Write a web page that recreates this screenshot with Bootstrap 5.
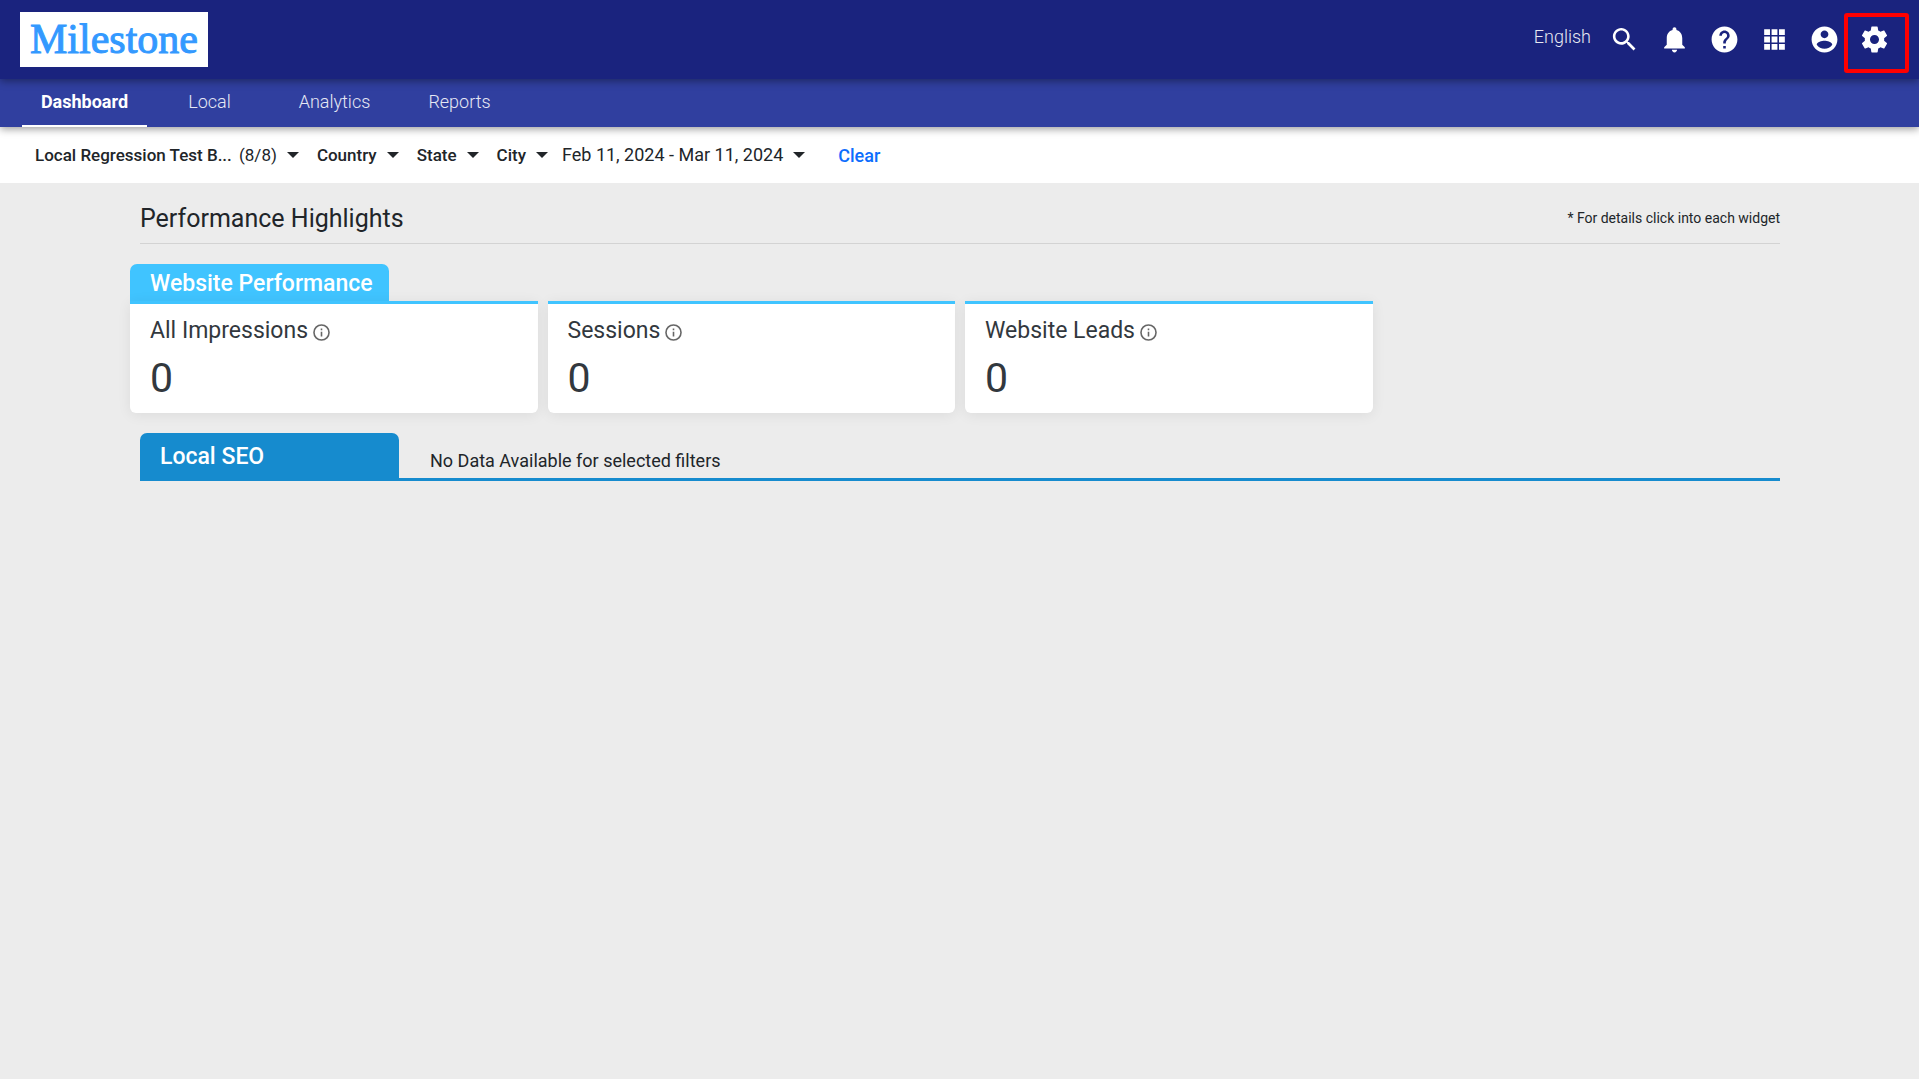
<!DOCTYPE html>
<html lang="en">
<head>
<meta charset="utf-8">
<meta name="viewport" content="width=device-width, initial-scale=1">
<title>Milestone - Dashboard</title>
<link href="https://cdn.jsdelivr.net/npm/bootstrap@5.3.0/dist/css/bootstrap.min.css" rel="stylesheet">
<style>
  body { font-family: Roboto, "Liberation Sans", sans-serif; background: #ececec; color: #212529; min-height: 100vh; }
  .top-bar { background: #1a237e; height: 79px; padding: 0 20px; z-index: 3; box-shadow: 0 2px 8px rgba(0,0,0,.4); }
  .brand-logo { background: #fff; color: #3399ff; width: 188px; height: 55px; font: 42px/54px "Liberation Serif", serif; text-align: center; -webkit-text-stroke: 1px #3399ff; }
  .brand-logo:hover { color: #3399ff; }
  .lang-btn { font-size: 18px; line-height: 24px; color: #e8e9f2; font-weight: 300; margin: 0 8px 6px 0; }
  .icon-btn { width: 50px; height: 50px; color: #fff; }
  .icon-btn svg { width: 31px; height: 31px; fill: currentColor; display: block; }
  .highlight-box { position: absolute; left: -5px; top: -2px; width: 65px; height: 60px; border: 4px solid #f00; border-radius: 3px; pointer-events: none; }
  .tab-bar { background: #303f9f; height: 48px; padding-left: 22px; z-index: 2; box-shadow: 0 2px 8px rgba(0,0,0,.4); }
  .tab-bar .nav-link { width: 125px; height: 48px; padding: 0 0 3px; font-size: 18px; font-weight: 300; line-height: 45px; text-align: center; color: #e6e8f4; border-bottom: 2px solid transparent; }
  .tab-bar .nav-link.active { color: #fff; font-weight: 700; border-color: #fff; }
  .filter-bar { background: #fff; height: 56px; padding: 0 35px; gap: 18px; z-index: 1; }
  .filter-btn { font-size: 17px; line-height: 24px; font-weight: 500; color: #212529; gap: 10px; }
  .filter-btn svg { width: 12px; height: 6px; fill: currentColor; flex: none; }
  .filter-name { width: 194px; text-align: left; }
  .filter-group { gap: 18px; margin-right: -4px; }
  .date-btn { font-size: 18px; font-weight: 400; }
  .clear-link { font-size: 18px; line-height: 24px; font-weight: 500; color: #0d6efd; padding: 2px 0 0 15px; }
  .page-body { padding: 0 139px 0 140px; }
  .page-head { height: 61px; padding-top: 10px; border-bottom: 1px solid #d3d3d3; }
  .page-head h1 { font-size: 25px; line-height: 30px; font-weight: 400; padding-top: 2px; }
  .hint { font-size: 14px; line-height: 20px; }
  .section-tab { width: 259px; padding: 0 20px; color: #fff; font-size: 23px; font-weight: 500; border-radius: 7px 7px 0 0; }
  .tab-web { background: #40c4ff; height: 37px; line-height: 40px; }
  .tab-seo { background: #168bce; height: 45px; line-height: 48px; }
  .web-section { margin: 20px -15px 0; }
  .web-section .col-3 { padding: 0 5px; }
  .metric { border: 0; border-top: 3px solid #40c4ff; border-radius: 0 0 6px 6px; height: 112px; padding: 13px 20px 0; color: #32383e; box-shadow: 0 2px 14px rgba(0,0,0,.07); }
  .metric h3 { font-size: 23px; line-height: 28px; font-weight: 400; gap: 4px; }
  .metric svg { width: 19px; height: 19px; margin-top: 2px; fill: #666; }
  .metric-value { font-size: 41px; line-height: 48px; margin-top: 9px; }
  .seo-section { margin-top: 20px; border-bottom: 3px solid #168bce; }
  .empty-note { font-size: 18px; line-height: 24px; margin: 10px 0 0 31px; }
</style>
</head>
<body>
<header class="top-bar position-relative d-flex align-items-center">
  <a href="#" class="brand-logo text-decoration-none me-auto">Milestone</a>
  <button type="button" class="lang-btn btn p-0 border-0">English</button>
  <button type="button" class="icon-btn btn p-0 border-0 d-flex align-items-center justify-content-center" aria-label="Search"><svg viewBox="0 0 24 24"><path d="M15.5 14h-.79l-.28-.27C15.41 12.59 16 11.11 16 9.5 16 5.91 13.09 3 9.5 3S3 5.91 3 9.5 5.91 16 9.5 16c1.61 0 3.09-.59 4.23-1.57l.27.28v.79l5 4.99L20.49 19l-4.99-5zm-6 0C7.01 14 5 11.99 5 9.5S7.01 5 9.5 5 14 7.01 14 9.5 11.99 14 9.5 14z"/></svg></button>
  <button type="button" class="icon-btn btn p-0 border-0 d-flex align-items-center justify-content-center" aria-label="Notifications"><svg viewBox="0 0 24 24"><path d="M12 22c1.1 0 2-.9 2-2h-4c0 1.1.89 2 2 2zm6-6v-5c0-3.07-1.64-5.64-4.5-6.32V4c0-.83-.67-1.5-1.5-1.5s-1.5.67-1.5 1.5v.68C7.63 5.36 6 7.92 6 11v5l-2 2v1h16v-1l-2-2z"/></svg></button>
  <button type="button" class="icon-btn btn p-0 border-0 d-flex align-items-center justify-content-center" aria-label="Help"><svg viewBox="0 0 24 24"><path d="M12 2C6.48 2 2 6.48 2 12s4.48 10 10 10 10-4.48 10-10S17.52 2 12 2zm1 17h-2v-2h2v2zm2.07-7.75l-.9.92C13.45 12.9 13 13.5 13 15h-2v-.5c0-1.1.45-2.1 1.17-2.83l1.24-1.26c.37-.36.59-.86.59-1.41 0-1.1-.9-2-2-2s-2 .9-2 2H8c0-2.21 1.79-4 4-4s4 1.79 4 4c0 .88-.36 1.68-.93 2.25z"/></svg></button>
  <button type="button" class="icon-btn btn p-0 border-0 d-flex align-items-center justify-content-center" aria-label="Apps"><svg viewBox="0 0 24 24"><path d="M4 4h4.500v4.500H4zM9.750 4h4.500v4.500h-4.500zM15.500 4H20v4.500h-4.500zM4 9.750h4.500v4.500H4zM9.750 9.750h4.500v4.500h-4.500zM15.500 9.750H20v4.500h-4.500zM4 15.500h4.500V20H4zM9.750 15.500h4.500V20h-4.500zM15.500 15.500H20V20h-4.500z"/></svg></button>
  <button type="button" class="icon-btn btn p-0 border-0 d-flex align-items-center justify-content-center" aria-label="Account"><svg viewBox="0 0 24 24"><path d="M12 2C6.480 2 2 6.480 2 12s4.480 10 10 10 10-4.480 10-10S17.520 2 12 2zm0 3c1.660 0 3 1.340 3 3s-1.340 3-3 3-3-1.340-3-3 1.340-3 3-3zm0 14.200c-2.500 0-4.710-1.280-6-3.220.03-1.990 4-3.080 6-3.080 1.990 0 5.970 1.090 6 3.080-1.290 1.940-3.500 3.220-6 3.220z"/></svg></button>
  <div class="position-relative">
    <button type="button" class="icon-btn btn p-0 border-0 d-flex align-items-center justify-content-center" aria-label="Settings"><svg viewBox="0 0 24 24"><path d="M19.430 12.980c.04-.32.070-.64.070-.98s-.03-.66-.07-.98l2.110-1.650c.19-.15.24-.42.120-.64l-2-3.460c-.12-.22-.39-.3-.61-.22l-2.490 1c-.52-.4-1.080-.73-1.690-.98l-.38-2.650C14.460 2.180 14.250 2 14 2h-4c-.25 0-.46.180-.49.420l-.38 2.650c-.61.250-1.170.59-1.690.98l-2.490-1c-.23-.09-.49 0-.61.220l-2 3.460c-.13.220-.07.490.120.640l2.110 1.650c-.04.320-.07.650-.07.980s.03.660.070.980l-2.110 1.650c-.19.150-.24.420-.12.640l2 3.460c.12.220.39.300.61.220l2.490-1c.52.400 1.080.730 1.690.980l.38 2.650c.03.240.24.420.49.420h4c.25 0 .46-.18.490-.42l.38-2.650c.61-.25 1.170-.59 1.690-.98l2.490 1c.23.090.49 0 .61-.22l2-3.460c.12-.22.070-.49-.12-.64l-2.110-1.650zM12 15.500c-1.930 0-3.500-1.570-3.500-3.500s1.570-3.500 3.500-3.500 3.500 1.570 3.500 3.500-1.570 3.500-3.500 3.500z"/></svg></button>
    <div class="highlight-box"></div>
  </div>
</header>
<nav class="tab-bar nav position-relative">
  <a class="nav-link active" href="#" aria-current="page">Dashboard</a>
  <a class="nav-link" href="#">Local</a>
  <a class="nav-link" href="#">Analytics</a>
  <a class="nav-link" href="#">Reports</a>
</nav>
<div class="filter-bar position-relative d-flex align-items-center">
  <div class="filter-group d-flex align-items-center">
    <button type="button" class="filter-btn btn p-0 border-0 d-flex align-items-center"><span class="filter-name text-nowrap">Local Regression Test B...</span><span class="fw-normal">(8/8)</span><svg viewBox="0 0 12 6"><path d="M0 0h12L6 6z"/></svg></button>
    <button type="button" class="filter-btn btn p-0 border-0 d-flex align-items-center">Country<svg viewBox="0 0 12 6"><path d="M0 0h12L6 6z"/></svg></button>
    <button type="button" class="filter-btn btn p-0 border-0 d-flex align-items-center">State<svg viewBox="0 0 12 6"><path d="M0 0h12L6 6z"/></svg></button>
    <button type="button" class="filter-btn btn p-0 border-0 d-flex align-items-center">City<svg viewBox="0 0 12 6"><path d="M0 0h12L6 6z"/></svg></button>
  </div>
  <button type="button" class="filter-btn date-btn btn p-0 border-0 d-flex align-items-center">Feb 11, 2024 - Mar 11, 2024<svg viewBox="0 0 12 6"><path d="M0 0h12L6 6z"/></svg></button>
  <a href="#" class="clear-link text-decoration-none">Clear</a>
</div>
<main class="page-body">
  <div class="page-head d-flex align-items-center justify-content-between">
    <h1 class="m-0">Performance Highlights</h1>
    <span class="hint">* For details click into each widget</span>
  </div>
  <section class="web-section">
    <div class="row g-0">
      <div class="col-3"><h2 class="section-tab tab-web m-0 text-nowrap">Website Performance</h2></div>
    </div>
    <div class="row g-0">
      <div class="col-3"><div class="metric card"><h3 class="m-0 d-flex align-items-center">All Impressions <svg viewBox="0 0 24 24"><path d="M11 7h2v2h-2zm0 4h2v6h-2zm1-9.500a10.500 10.500 0 1 0 0 21 10.500 10.500 0 0 0 0-21zm0 19a8.500 8.500 0 1 1 0-17 8.500 8.500 0 0 1 0 17z"/></svg></h3><div class="metric-value">0</div></div></div>
      <div class="col-3"><div class="metric card"><h3 class="m-0 d-flex align-items-center">Sessions <svg viewBox="0 0 24 24"><path d="M11 7h2v2h-2zm0 4h2v6h-2zm1-9.500a10.500 10.500 0 1 0 0 21 10.500 10.500 0 0 0 0-21zm0 19a8.500 8.500 0 1 1 0-17 8.500 8.500 0 0 1 0 17z"/></svg></h3><div class="metric-value">0</div></div></div>
      <div class="col-3"><div class="metric card"><h3 class="m-0 d-flex align-items-center">Website Leads <svg viewBox="0 0 24 24"><path d="M11 7h2v2h-2zm0 4h2v6h-2zm1-9.500a10.500 10.500 0 1 0 0 21 10.500 10.500 0 0 0 0-21zm0 19a8.500 8.500 0 1 1 0-17 8.500 8.500 0 0 1 0 17z"/></svg></h3><div class="metric-value">0</div></div></div>
    </div>
  </section>
  <section class="seo-section d-flex align-items-center">
    <h2 class="section-tab tab-seo m-0">Local SEO</h2>
    <p class="empty-note mb-0">No Data Available for selected filters</p>
  </section>
</main>
<script src="https://cdn.jsdelivr.net/npm/bootstrap@5.3.0/dist/js/bootstrap.bundle.min.js"></script>
</body>
</html>
